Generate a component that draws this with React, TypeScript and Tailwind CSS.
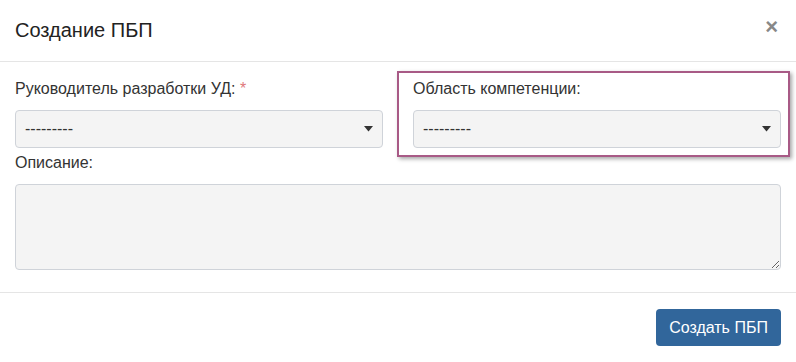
import React from 'react';

function Caret() {
  return (
    <svg width="9" height="6" viewBox="0 0 9 6" className="shrink-0">
      <path d="M0 0 L9 0 L4.5 5.5 Z" fill="#333" />
    </svg>
  );
}

function FakeSelect() {
  return (
    <div className="flex items-center justify-between h-[38px] pl-[9px] pr-[9px] bg-[#f4f4f4] border border-[#cfd3d9] rounded-[4px] text-[16px] text-[#333]">
      <span>---------</span>
      <Caret />
    </div>
  );
}

export default function App() {
  return (
    <div className="w-[796px] h-[362px] bg-white text-[#333] font-['Liberation_Sans',Arial,sans-serif]">
      {/* Шапка */}
      <div className="h-[62px] flex items-center justify-between px-[15px] border-b border-[#e5e5e5]">
        <h4 className="text-[20px] leading-none text-[#222] mt-[-2px]">Создание ПБП</h4>
        <button className="text-[22px] font-bold leading-none text-[#888] mr-[3px] mt-[-8px]">×</button>
      </div>

      {/* Тело */}
      <div className="px-[15px] pt-[16px] pb-[22px]">
        <div className="grid grid-cols-2 gap-[30px]">
          <div>
            <label className="block text-[16px] leading-[22px] mb-[10px]">
              Руководитель разработки УД: <span className="text-[#e0777a]">*</span>
            </label>
            <FakeSelect />
          </div>
          <div className="relative">
            <label className="block text-[16px] leading-[22px] mb-[10px]">Область компетенции:</label>
            <FakeSelect />
            {/* рамка-выделение */}
            <div className="absolute left-[-16px] right-[-9px] top-[-7px] bottom-[-9px] border-2 border-[#a85a86] shadow-[2px_2px_4px_rgba(0,0,0,0.35)] pointer-events-none" />
          </div>
        </div>

        <label className="block text-[16px] leading-[22px] mt-[4px] mb-[10px]">Описание:</label>
        <textarea className="block w-full h-[86px] bg-[#f4f4f4] border border-[#cfd3d9] rounded-[4px] resize-y outline-none" />
      </div>

      {/* Подвал */}
      <div className="border-t border-[#e5e5e5] px-[15px] pt-[16px] flex justify-end">
        <button className="h-[37px] w-[125px] rounded-[4px] bg-[#31669b] text-white text-[16px]">Создать ПБП</button>
      </div>
    </div>
  );
}
